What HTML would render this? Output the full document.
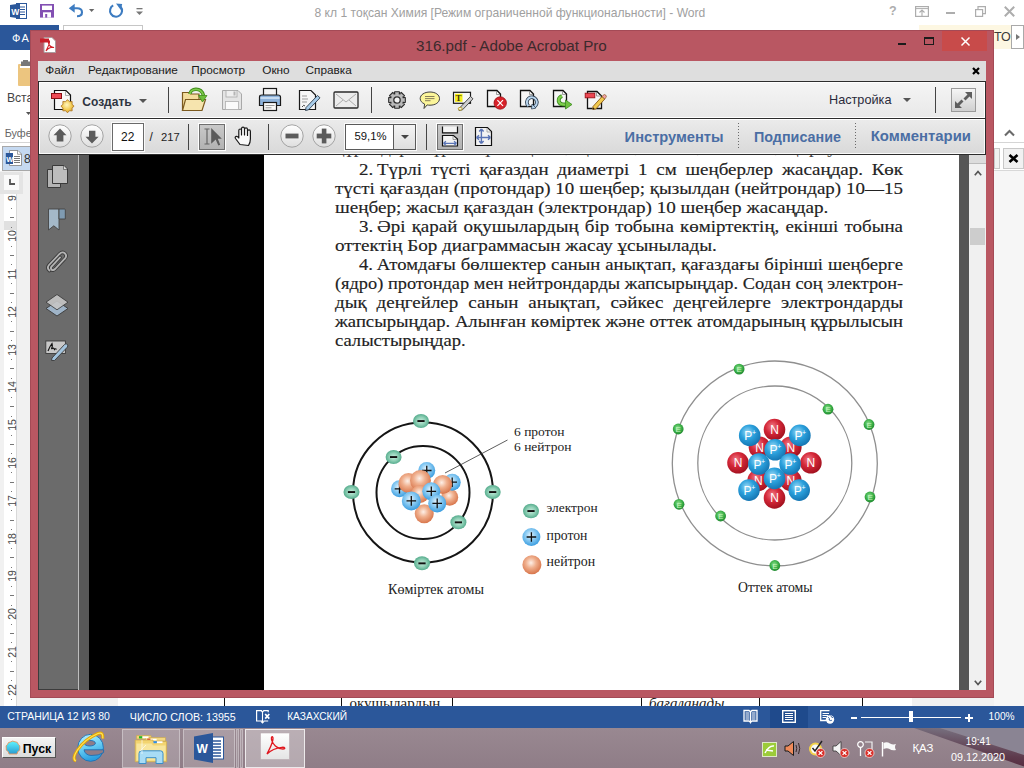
<!DOCTYPE html>
<html><head><meta charset="utf-8">
<style>
*{margin:0;padding:0;box-sizing:border-box}
html,body{width:1024px;height:768px;overflow:hidden;background:#fff;font-family:"Liberation Sans",sans-serif}
.a{position:absolute}
.t{white-space:nowrap}
svg{overflow:visible}
</style></head><body>
<div class="a" style="left:0px;top:0px;width:1024px;height:25px;background:#fff"></div>
<svg class="a" style="left:10px;top:3px;" width="17" height="16" viewBox="0 0 17 16"><rect x="6.5" y="0.5" width="10" height="15" fill="#fff" stroke="#2b579a"/>
<line x1="9" y1="4" x2="15" y2="4" stroke="#2b579a"/><line x1="9" y1="6.5" x2="15" y2="6.5" stroke="#2b579a"/>
<line x1="9" y1="9" x2="15" y2="9" stroke="#2b579a"/><line x1="9" y1="11.5" x2="15" y2="11.5" stroke="#2b579a"/>
<path d="M0 2 L10 0.5 L10 15.5 L0 14 Z" fill="#2b579a"/>
<text x="1.2" y="11.5" font-family="Liberation Sans" font-weight="700" font-size="8.5" fill="#fff">W</text></svg>
<svg class="a" style="left:40px;top:4px;" width="14" height="14" viewBox="0 0 14 14"><rect x="0" y="0" width="14" height="13.6" fill="#8350b3"/>
<rect x="2" y="1.6" width="10" height="4.4" fill="#fff"/>
<rect x="3" y="8.3" width="8" height="5.3" fill="#fff"/><rect x="5.2" y="10" width="2" height="3.6" fill="#8350b3"/></svg>
<svg class="a" style="left:68px;top:3px;" width="17" height="15" viewBox="0 0 17 15"><path d="M3 5.3 H9 Q14 5.3 14 9.2 Q14 13.3 9 13.3" fill="none" stroke="#3d7cc1" stroke-width="2.1"/>
<path d="M0.8 5.3 L6.7 0.8 V9.8 Z" fill="#3d7cc1"/></svg>
<svg class="a" style="left:88.7px;top:9px;" width="5.3" height="3" viewBox="0 0 5.3 3"><path d="M0 0 H5.3 L2.65 3 Z" fill="#666"/></svg>
<svg class="a" style="left:108px;top:2px;" width="16" height="16" viewBox="0 0 16 16"><path d="M5.2 3.4 A6 6 0 1 0 12.6 4.8" fill="none" stroke="#3d7cc1" stroke-width="2.1"/>
<path d="M8 1.5 L14.2 2 L12.8 8 Z" fill="#3d7cc1"/></svg>
<svg class="a" style="left:136px;top:8px;" width="7" height="8" viewBox="0 0 7 8"><rect x="0.5" y="0" width="6" height="1.3" fill="#777"/><path d="M0 3.5 H7 L3.5 7 Z" fill="#777"/></svg>
<div class="a t" style="left:314.5px;top:6.76px;font-size:12.1px;line-height:12.1px;color:#a0a0a0;font-weight:400;font-family:'Liberation Sans',sans-serif;">8 кл 1 тоқсан Химия [Режим ограниченной функциональности] - Word</div>
<div class="a t" style="left:889px;top:4.92px;font-size:12.5px;line-height:12.5px;color:#adadad;font-weight:700;font-family:'Liberation Sans',sans-serif;">?</div>
<svg class="a" style="left:915px;top:6px;" width="14" height="11" viewBox="0 0 14 11"><rect x="0.6" y="0.6" width="12.8" height="9.8" fill="none" stroke="#adadad" stroke-width="1.2"/><line x1="0.6" y1="2.6" x2="13.4" y2="2.6" stroke="#adadad" stroke-width="1"/><path d="M4.5 6.5 L7 4 L9.5 6.5 M7 4 V10" fill="none" stroke="#adadad" stroke-width="1.1"/></svg>
<div class="a" style="left:946px;top:12px;width:9px;height:2px;background:#adadad"></div>
<svg class="a" style="left:975px;top:6px;" width="11" height="11" viewBox="0 0 11 11"><rect x="0.6" y="3.6" width="7" height="6.8" fill="none" stroke="#adadad" stroke-width="1.2"/><path d="M3 3.6 V0.6 H10.4 V7.6 H7.6" fill="none" stroke="#adadad" stroke-width="1.2"/></svg>
<svg class="a" style="left:1004px;top:6px;" width="11" height="11" viewBox="0 0 11 11"><path d="M0.8 0.8 L10.2 10.2 M10.2 0.8 L0.8 10.2" stroke="#adadad" stroke-width="2"/></svg>
<div class="a" style="left:0px;top:25px;width:59px;height:25px;background:#2b579a"></div>
<div class="a t" style="left:12px;top:32.69px;font-size:11px;line-height:11px;color:#fff;font-weight:400;font-family:'Liberation Sans',sans-serif;letter-spacing:1.3px">ФАЙЛ</div>
<div class="a" style="left:63px;top:25px;width:80px;height:30px;border:1px solid #c6c6c6;border-bottom:none;background:#fff"></div>
<div class="a" style="left:919px;top:25px;width:92px;height:24px;background:#fdf7e2"></div>
<div class="a t" style="left:994px;top:31.12px;font-size:12.5px;line-height:12.5px;color:#3a3a3a;font-weight:400;font-family:'Liberation Sans',sans-serif;">ТОІ</div>
<div class="a" style="left:1011px;top:25px;width:13px;height:24px;background:#fff;border:1.5px solid #a9a9a9"></div>
<svg class="a" style="left:1016px;top:34px;" width="4" height="6" viewBox="0 0 4 6"><path d="M0 0 L4 3 L0 6 Z" fill="#777"/></svg>
<svg class="a" style="left:17px;top:60px;" width="14" height="27" viewBox="0 0 14 27"><rect x="1" y="4" width="14" height="22" rx="1" fill="#ecc57f"/>
<rect x="4" y="1.5" width="9" height="6" fill="#777" /><rect x="6" y="0" width="5" height="3" fill="#777"/><rect x="3" y="6" width="11" height="2" fill="#fff"/></svg>
<div class="a t" style="left:6.9px;top:92.47px;font-size:12.2px;line-height:12.2px;color:#444;font-weight:400;font-family:'Liberation Sans',sans-serif;">Вставить</div>
<svg class="a" style="left:26px;top:112px;" width="5" height="3" viewBox="0 0 5 3"><path d="M0 0 H5 L2.5 3 Z" fill="#555"/></svg>
<div class="a t" style="left:4.7px;top:128.46px;font-size:10.8px;line-height:10.8px;color:#666;font-weight:400;font-family:'Liberation Sans',sans-serif;">Буфер</div>
<div class="a" style="left:0px;top:142px;width:1024px;height:1px;background:#d5d5d5"></div>
<svg class="a" style="left:1004px;top:130px;" width="11" height="6" viewBox="0 0 11 6"><path d="M1 5.5 L5.5 1 L10 5.5" fill="none" stroke="#6a6a6a" stroke-width="2.1"/></svg>
<div class="a" style="left:0px;top:143px;width:1024px;height:28px;background:#fff"></div>
<div class="a" style="left:2px;top:146px;width:60px;height:25px;background:#c5d9f1;border:1px solid #a8a8a8"></div>
<svg class="a" style="left:5px;top:150px;" width="18" height="17" viewBox="0 0 18 17"><path d="M4.5 0.5 H13 L16.5 4 V15.5 H4.5 Z" fill="#fff" stroke="#8a8a8a" stroke-width="0.9"/><path d="M12.5 0.8 V4.3 H16.2" fill="none" stroke="#8a8a8a" stroke-width="0.8"/>
<line x1="9" y1="6.5" x2="15" y2="6.5" stroke="#777"/><line x1="9" y1="8.5" x2="15" y2="8.5" stroke="#777"/><line x1="9" y1="10.5" x2="15" y2="10.5" stroke="#777"/><line x1="9" y1="12.5" x2="15" y2="12.5" stroke="#777"/>
<path d="M0.8 3 H8 V14 H0.8 Z" fill="#2b579a"/><text x="1.2" y="11.6" font-family="Liberation Sans" font-weight="700" font-size="7.5" fill="#fff">W</text></svg>
<div class="a t" style="left:24px;top:152.84px;font-size:12px;line-height:12px;color:#333;font-weight:400;font-family:'Liberation Sans',sans-serif;">8</div>
<div class="a" style="left:1003px;top:148px;width:21px;height:21px;background:#f1f1f1;border:1px solid #c8c8c8"></div>
<svg class="a" style="left:1008px;top:154px;" width="11" height="9" viewBox="0 0 11 9"><path d="M1.5 1 L9.5 8 M9.5 1 L1.5 8" stroke="#000" stroke-width="2.6"/></svg>
<div class="a" style="left:994px;top:148px;width:6px;height:21px;background:#f1f1f1;border:1px solid #c8c8c8"></div>
<div class="a" style="left:994px;top:170px;width:30px;height:1px;background:#d8d8d8"></div>
<div class="a" style="left:0px;top:171px;width:1024px;height:535px;background:#f1f1f1"></div>
<div class="a" style="left:994px;top:171px;width:30px;height:535px;background:#f6f6f6"></div>
<div class="a" style="left:0px;top:172px;width:23px;height:22px;background:#e4e4e4"></div>
<div class="a" style="left:4px;top:175px;width:15px;height:15px;background:#fafafa"></div>
<svg class="a" style="left:9px;top:179px;" width="6" height="6" viewBox="0 0 6 6"><path d="M1 0 V5 H6" fill="none" stroke="#555" stroke-width="1.8"/></svg>
<div class="a" style="left:4px;top:194px;width:13px;height:512px;background:#fff"></div>
<div class="a" style="left:16px;top:194px;width:1px;height:512px;background:#d9d9d9"></div>
<div class="a" style="left:4px;top:221px;width:12px;height:9px;background:#e0e0e0"></div>
<div class="a t" style="left:1.6999999999999993px;top:192.3px;width:20px;height:12px;line-height:12px;text-align:center;font-size:10.5px;color:#444;transform:rotate(-90deg)">9</div>
<div class="a" style="left:11px;top:208px;width:1px;height:1px;background:#777"></div>
<div class="a" style="left:10px;top:217px;width:4px;height:1px;background:#777"></div>
<div class="a" style="left:11px;top:227px;width:1px;height:1px;background:#777"></div>
<div class="a t" style="left:1.6999999999999993px;top:230.10000000000002px;width:20px;height:12px;line-height:12px;text-align:center;font-size:10.5px;color:#444;transform:rotate(-90deg)">10</div>
<div class="a" style="left:11px;top:246px;width:1px;height:1px;background:#777"></div>
<div class="a" style="left:10px;top:255px;width:4px;height:1px;background:#777"></div>
<div class="a" style="left:11px;top:264px;width:1px;height:1px;background:#777"></div>
<div class="a t" style="left:1.6999999999999993px;top:267.9px;width:20px;height:12px;line-height:12px;text-align:center;font-size:10.5px;color:#444;transform:rotate(-90deg)">11</div>
<div class="a" style="left:11px;top:283px;width:1px;height:1px;background:#777"></div>
<div class="a" style="left:10px;top:293px;width:4px;height:1px;background:#777"></div>
<div class="a" style="left:11px;top:302px;width:1px;height:1px;background:#777"></div>
<div class="a t" style="left:1.6999999999999993px;top:305.7px;width:20px;height:12px;line-height:12px;text-align:center;font-size:10.5px;color:#444;transform:rotate(-90deg)">12</div>
<div class="a" style="left:11px;top:321px;width:1px;height:1px;background:#777"></div>
<div class="a" style="left:10px;top:331px;width:4px;height:1px;background:#777"></div>
<div class="a" style="left:11px;top:340px;width:1px;height:1px;background:#777"></div>
<div class="a t" style="left:1.6999999999999993px;top:343.5px;width:20px;height:12px;line-height:12px;text-align:center;font-size:10.5px;color:#444;transform:rotate(-90deg)">13</div>
<div class="a" style="left:11px;top:359px;width:1px;height:1px;background:#777"></div>
<div class="a" style="left:10px;top:368px;width:4px;height:1px;background:#777"></div>
<div class="a" style="left:11px;top:378px;width:1px;height:1px;background:#777"></div>
<div class="a t" style="left:1.6999999999999993px;top:381.3px;width:20px;height:12px;line-height:12px;text-align:center;font-size:10.5px;color:#444;transform:rotate(-90deg)">14</div>
<div class="a" style="left:11px;top:397px;width:1px;height:1px;background:#777"></div>
<div class="a" style="left:10px;top:406px;width:4px;height:1px;background:#777"></div>
<div class="a" style="left:11px;top:416px;width:1px;height:1px;background:#777"></div>
<div class="a t" style="left:1.6999999999999993px;top:419.1px;width:20px;height:12px;line-height:12px;text-align:center;font-size:10.5px;color:#444;transform:rotate(-90deg)">15</div>
<div class="a" style="left:11px;top:435px;width:1px;height:1px;background:#777"></div>
<div class="a" style="left:10px;top:444px;width:4px;height:1px;background:#777"></div>
<div class="a" style="left:11px;top:453px;width:1px;height:1px;background:#777"></div>
<div class="a t" style="left:1.6999999999999993px;top:456.9px;width:20px;height:12px;line-height:12px;text-align:center;font-size:10.5px;color:#444;transform:rotate(-90deg)">16</div>
<div class="a" style="left:11px;top:472px;width:1px;height:1px;background:#777"></div>
<div class="a" style="left:10px;top:482px;width:4px;height:1px;background:#777"></div>
<div class="a" style="left:11px;top:491px;width:1px;height:1px;background:#777"></div>
<div class="a t" style="left:1.6999999999999993px;top:494.7px;width:20px;height:12px;line-height:12px;text-align:center;font-size:10.5px;color:#444;transform:rotate(-90deg)">17</div>
<div class="a" style="left:11px;top:510px;width:1px;height:1px;background:#777"></div>
<div class="a" style="left:10px;top:520px;width:4px;height:1px;background:#777"></div>
<div class="a" style="left:11px;top:529px;width:1px;height:1px;background:#777"></div>
<div class="a t" style="left:1.6999999999999993px;top:532.5px;width:20px;height:12px;line-height:12px;text-align:center;font-size:10.5px;color:#444;transform:rotate(-90deg)">18</div>
<div class="a" style="left:11px;top:548px;width:1px;height:1px;background:#777"></div>
<div class="a" style="left:10px;top:557px;width:4px;height:1px;background:#777"></div>
<div class="a" style="left:11px;top:567px;width:1px;height:1px;background:#777"></div>
<div class="a t" style="left:1.6999999999999993px;top:570.3px;width:20px;height:12px;line-height:12px;text-align:center;font-size:10.5px;color:#444;transform:rotate(-90deg)">19</div>
<div class="a" style="left:11px;top:586px;width:1px;height:1px;background:#777"></div>
<div class="a" style="left:10px;top:595px;width:4px;height:1px;background:#777"></div>
<div class="a" style="left:11px;top:605px;width:1px;height:1px;background:#777"></div>
<div class="a t" style="left:1.6999999999999993px;top:608.0999999999999px;width:20px;height:12px;line-height:12px;text-align:center;font-size:10.5px;color:#444;transform:rotate(-90deg)">20</div>
<div class="a" style="left:11px;top:624px;width:1px;height:1px;background:#777"></div>
<div class="a" style="left:10px;top:633px;width:4px;height:1px;background:#777"></div>
<div class="a" style="left:11px;top:642px;width:1px;height:1px;background:#777"></div>
<div class="a t" style="left:1.6999999999999993px;top:645.9px;width:20px;height:12px;line-height:12px;text-align:center;font-size:10.5px;color:#444;transform:rotate(-90deg)">21</div>
<div class="a" style="left:11px;top:661px;width:1px;height:1px;background:#777"></div>
<div class="a" style="left:10px;top:671px;width:4px;height:1px;background:#777"></div>
<div class="a" style="left:11px;top:680px;width:1px;height:1px;background:#777"></div>
<div class="a t" style="left:1.6999999999999993px;top:683.7px;width:20px;height:12px;line-height:12px;text-align:center;font-size:10.5px;color:#444;transform:rotate(-90deg)">22</div>
<div class="a" style="left:11px;top:699px;width:1px;height:1px;background:#777"></div>
<div class="a" style="left:118px;top:698px;width:794px;height:8px;background:#fff"></div>
<div class="a" style="left:224px;top:698px;width:1px;height:8px;background:#111"></div>
<div class="a" style="left:341px;top:698px;width:1px;height:8px;background:#111"></div>
<div class="a" style="left:452px;top:698px;width:1px;height:8px;background:#111"></div>
<div class="a" style="left:641px;top:698px;width:1px;height:8px;background:#111"></div>
<div class="a" style="left:759px;top:698px;width:1px;height:8px;background:#111"></div>
<div class="a" style="left:862px;top:698px;width:1px;height:8px;background:#111"></div>
<div class="a t" style="left:349.4px;top:696.24px;font-size:15px;line-height:15px;color:#1a1a1a;font-weight:400;font-family:'Liberation Serif',sans-serif;">окушылардың</div>
<div class="a t" style="left:649px;top:696.24px;font-size:15px;line-height:15px;color:#1a1a1a;font-weight:400;font-family:'Liberation Serif',sans-serif;"><i>бағаланады</i></div>
<div class="a" style="left:0px;top:706px;width:1024px;height:22px;background:#2b579a"></div>
<div class="a t" style="left:7.3px;top:711.93px;font-size:10.48px;line-height:10.48px;color:#fff;font-weight:400;font-family:'Liberation Sans',sans-serif;">СТРАНИЦА 12 ИЗ 80</div>
<div class="a t" style="left:129.8px;top:711.75px;font-size:10.69px;line-height:10.69px;color:#fff;font-weight:400;font-family:'Liberation Sans',sans-serif;">ЧИСЛО СЛОВ: 13955</div>
<svg class="a" style="left:255px;top:709px;" width="17" height="16" viewBox="0 0 17 16"><path d="M7 1.6 H1.6 V12 H7" fill="none" stroke="#fff" stroke-width="1.2"/>
<path d="M6.2 1.6 L7.5 3 L8.8 1.6 H13.2 V3.2" fill="none" stroke="#fff" stroke-width="1.2"/>
<path d="M7.5 3 V13.8 M6 12.3 L7.5 14 L9 12.3 M8.5 12 H13.2" fill="none" stroke="#fff" stroke-width="1.1"/>
<path d="M10.2 5 L14.3 9.6 M14.3 5 L10.2 9.6" stroke="#fff" stroke-width="1.7"/></svg>
<div class="a t" style="left:287.2px;top:712.17px;font-size:10.19px;line-height:10.19px;color:#fff;font-weight:400;font-family:'Liberation Sans',sans-serif;">КАЗАХСКИЙ</div>
<div class="a" style="left:770px;top:706px;width:38px;height:22px;background:#1f4a8c"></div>
<svg class="a" style="left:743px;top:709px;" width="15" height="15" viewBox="0 0 15 15"><path d="M1 1.5 H6 L7.5 2.8 L9 1.5 H14 V12 H9 L7.5 13.3 L6 12 H1 Z" fill="none" stroke="#fff" stroke-width="1.3"/>
<path d="M2.5 4 H6.5 M2.5 6 H6.5 M2.5 8 H6.5 M2.5 10 H6.5 M8.5 4 H12.5 M8.5 6 H12.5 M8.5 8 H12.5 M8.5 10 H12.5" stroke="#fff" stroke-width="1"/><path d="M7.5 2.5 V14.5" stroke="#fff" stroke-width="1"/></svg>
<svg class="a" style="left:782px;top:710px;" width="14" height="13" viewBox="0 0 14 13"><rect x="0.7" y="0.7" width="12.6" height="11.6" fill="none" stroke="#fff" stroke-width="1.4"/>
<path d="M3 3.5 H11 M3 5.5 H11 M3 7.5 H11 M3 9.5 H11" stroke="#fff" stroke-width="1.1"/></svg>
<svg class="a" style="left:820px;top:710px;" width="15" height="14" viewBox="0 0 15 14"><path d="M9.5 0.7 H0.7 V10.5 H6" fill="none" stroke="#fff" stroke-width="1.3"/>
<path d="M2.5 3.5 H9 M2.5 5.5 H8 M2.5 7.5 H6" stroke="#fff" stroke-width="1"/>
<circle cx="10" cy="9.5" r="4.2" fill="#fff"/><path d="M8.3 7.2 Q10 8.5 9.2 10 Q10.5 11 11.8 10.3 M10.5 5.8 Q12 7 12.8 8" fill="none" stroke="#2b579a" stroke-width="1"/></svg>
<div class="a" style="left:851px;top:717px;width:6px;height:2px;background:#fff"></div>
<div class="a" style="left:861px;top:717px;width:100px;height:1px;background:#fff"></div>
<div class="a" style="left:909px;top:711px;width:4px;height:11px;background:#fff"></div>
<div class="a" style="left:965px;top:717px;width:8px;height:2px;background:#fff"></div>
<div class="a" style="left:968px;top:714px;width:2px;height:8px;background:#fff"></div>
<div class="a t" style="left:988.6px;top:712.19px;font-size:10.17px;line-height:10.17px;color:#fff;font-weight:400;font-family:'Liberation Sans',sans-serif;">100%</div>
<div class="a" style="left:0px;top:728px;width:1024px;height:40px;background:linear-gradient(#998891,#8f7d87)"></div>
<svg class="a" style="left:900px;top:728px;" width="124" height="40" viewBox="0 0 124 40"><defs><linearGradient id="gstk" x1="0" y1="1" x2="0.25" y2="0"><stop offset="0" stop-color="#4e2236"/><stop offset="0.45" stop-color="#5e3a4c"/><stop offset="1" stop-color="#77707f"/></linearGradient></defs>
<path d="M40 0 H124 V27 Z" fill="#8a8493"/>
<path d="M14 0 H40 L124 27 V38.5 Z" fill="url(#gstk)"/></svg>
<div class="a" style="left:2px;top:737px;width:54px;height:21px;background:linear-gradient(#f4f4f4,#dcdcdc);border:1px solid #fff;border-right-color:#555;border-bottom-color:#555"></div>
<svg class="a" style="left:5px;top:740px;" width="16" height="16" viewBox="0 0 16 16"><defs><linearGradient id="gsh" x1="0" y1="0" x2="0" y2="1"><stop offset="0" stop-color="#5ef6ff"/><stop offset="1" stop-color="#2a9ad0"/></linearGradient></defs>
<path d="M4 14 L3.2 11.5 Q0.5 10.5 1.2 8 Q0.3 5.5 2.5 4.5 Q3 1.8 5.5 2 Q7.5 0.3 10 1.8 Q12.8 1.5 13.3 4.5 Q15.6 5.5 14.8 8 Q15.5 10.5 12.8 11.5 L12 14 Z" fill="url(#gsh)" stroke="#e8945a" stroke-width="0.9"/></svg>
<div class="a t" style="left:22.7px;top:742.50px;font-size:12.4px;line-height:12.4px;color:#000;font-weight:700;font-family:'Liberation Sans',sans-serif;">Пуск</div>
<svg class="a" style="left:70px;top:728px;" width="40" height="40" viewBox="0 0 40 40"><defs><linearGradient id="gie" x1="0" y1="0" x2="0.3" y2="1"><stop offset="0" stop-color="#bff4ff"/><stop offset="0.5" stop-color="#6fd2f6"/><stop offset="1" stop-color="#2a9ee0"/></linearGradient></defs>
<ellipse cx="20.6" cy="19.8" rx="12.8" ry="13.5" fill="url(#gie)" stroke="#1c6fb4" stroke-width="0.9"/>
<ellipse cx="19.8" cy="15.2" rx="5.6" ry="2.8" fill="#8f7c87" stroke="#1c6fb4" stroke-width="0.9"/>
<path d="M14 21.8 H33.6 V24.5 Q29 27.8 21 27.5 Q15 27 14 21.8 Z" fill="#8f7c87" stroke="#1c6fb4" stroke-width="0.9"/>
<path d="M6 33 Q1.5 31 7.5 22 Q15 11 28 5.5 Q33.5 3.5 32.8 10.5" fill="none" stroke="#e9a800" stroke-width="3"/>
<path d="M6 33 Q1.5 31 7.5 22 Q15 11 28 5.5 Q33.5 3.5 32.8 10.5" fill="none" stroke="#fde35a" stroke-width="1.2"/></svg>
<div class="a" style="left:122px;top:729px;width:58px;height:39px;background:rgba(255,255,255,0.18);border:1px solid rgba(255,255,255,0.35)"></div>
<svg class="a" style="left:134px;top:734px;" width="34" height="31" viewBox="0 0 34 31"><path d="M2.5 1.5 H17 L17.5 5 H2.5 Z" fill="#f1d37a" stroke="#caa64a" stroke-width="0.6"/>
<path d="M11.5 3.5 H31.5 V7 H11.5 Z" fill="#f3d883" stroke="#caa64a" stroke-width="0.6"/>
<rect x="5" y="2.2" width="3.3" height="2.2" fill="#1fb82a"/><rect x="8.5" y="2.4" width="6" height="1.8" fill="#fff"/>
<rect x="13.2" y="4.6" width="3.3" height="2" fill="#e03a2a"/><rect x="16.6" y="4.8" width="6" height="1.6" fill="#fff"/>
<path d="M1.2 6 H19 V7.5 H32.6 V27.7 H1.2 Z" fill="#f3d470" stroke="#d0ad50" stroke-width="0.8"/>
<rect x="19.5" y="7.2" width="3.3" height="2" fill="#2a8ef0"/><rect x="23" y="7.3" width="5.5" height="1.8" fill="#fff"/>
<path d="M2.5 9.5 H17.5 L19 11.5 H31.5 V26.5 H2.5 Z" fill="#f8e59c"/>
<path d="M5 19.5 Q5 16.8 7.5 16.8 H26.5 Q29 16.8 29 19.5 V29.5 H22 V23.7 H12 V29.5 H5 Z" fill="#a8dcf5" stroke="#3a8ec8" stroke-width="1"/>
<path d="M8 6 V20 M6 17 L12 11" stroke="#fff" stroke-width="0.7" opacity="0.9"/></svg>
<div class="a" style="left:183px;top:729px;width:52px;height:39px;background:rgba(255,255,255,0.18);border:1px solid rgba(255,255,255,0.35)"></div>
<div class="a" style="left:236px;top:729px;width:3px;height:39px;background:rgba(255,255,255,0.16);border:1px solid rgba(255,255,255,0.3)"></div>
<div class="a" style="left:240px;top:729px;width:3px;height:39px;background:rgba(255,255,255,0.16);border:1px solid rgba(255,255,255,0.3)"></div>
<svg class="a" style="left:194px;top:733px;" width="30" height="30" viewBox="0 0 30 30"><rect x="14" y="4" width="15.5" height="22" fill="#fff" stroke="#2b579a" stroke-width="1"/>
<path d="M17 8 H27 M17 11 H27 M17 14 H27 M17 17 H27 M17 20 H27 M17 23 H27" stroke="#2b579a" stroke-width="1.3"/>
<path d="M0 3.5 L19 0 V30 L0 26.5 Z" fill="#2b579a"/>
<text x="2.5" y="19.5" font-family="Liberation Sans" font-weight="700" font-size="12" fill="#fff">W</text></svg>
<div class="a" style="left:245px;top:729px;width:60px;height:39px;background:rgba(255,255,255,0.33);border:1px solid rgba(255,255,255,0.75)"></div>
<svg class="a" style="left:260px;top:733px;" width="30" height="27" viewBox="0 0 30 27"><defs><linearGradient id="gacr" x1="0" y1="0" x2="0" y2="1"><stop offset="0" stop-color="#fff"/><stop offset="1" stop-color="#e4e4e4"/></linearGradient></defs>
<rect x="0.5" y="0" width="29" height="26.5" fill="url(#gacr)" stroke="#b9a9b0" stroke-width="0.6"/>
<path d="M7 21 C10 15 13.5 9 13 5 C12.5 2.5 11 3.5 11.5 6.5 C12.5 11 17 16 23 16 C26 16 25 14 22 14.3 C17 14.8 11 17 7 21 Z" fill="none" stroke="#e0161e" stroke-width="1.3"/></svg>
<svg class="a" style="left:762px;top:742px;" width="15" height="15" viewBox="0 0 15 15"><rect x="0.5" y="0.5" width="14" height="14" fill="#9ccc3a" stroke="#dfe8c8" stroke-width="1"/><path d="M3 11 Q7 3 12 4 M4 8 L11 9" stroke="#fff" stroke-width="1.5" fill="none"/></svg>
<svg class="a" style="left:784px;top:740px;" width="17" height="17" viewBox="0 0 17 17"><path d="M1 6 H4 L9.5 1.5 V15.5 L4 11 H1 Z" fill="#f08a5a" stroke="#1a1a1a" stroke-width="1"/>
<path d="M12 5 Q13.5 8.5 12 12 M14.5 3 Q17 8.5 14.5 14" fill="none" stroke="#3a2a2a" stroke-width="1"/></svg>
<svg class="a" style="left:808px;top:740px;" width="18" height="18" viewBox="0 0 18 18"><circle cx="7.5" cy="9" r="6.5" fill="#f3d24a"/><circle cx="7.5" cy="9" r="4.5" fill="#fafafa"/>
<path d="M4.5 8 L7 11 L14 1" fill="none" stroke="#222" stroke-width="1.4"/>
<circle cx="12.5" cy="13" r="4.5" fill="#d9302a" stroke="#fff" stroke-width="0.6"/><path d="M10.6 11.1 L14.4 14.9 M14.4 11.1 L10.6 14.9" stroke="#fff" stroke-width="1.3"/></svg>
<svg class="a" style="left:832px;top:740px;" width="18" height="18" viewBox="0 0 18 18"><path d="M1 6 H4 L9 1.5 V15.5 L4 11 H1 Z" fill="#f4f4f4" stroke="#333" stroke-width="0.8"/>
<circle cx="12.5" cy="13" r="4.5" fill="#d9302a" stroke="#fff" stroke-width="0.6"/><path d="M10.6 11.1 L14.4 14.9 M14.4 11.1 L10.6 14.9" stroke="#fff" stroke-width="1.3"/></svg>
<svg class="a" style="left:857px;top:740px;" width="18" height="18" viewBox="0 0 18 18"><circle cx="3.5" cy="4.5" r="2.8" fill="none" stroke="#fff" stroke-width="1.2"/><path d="M3.5 7 V16" stroke="#fff" stroke-width="1.3"/>
<path d="M8 2 H15 V10 M8 16 H10" fill="none" stroke="#f0f0f0" stroke-width="1.2"/>
<circle cx="12.5" cy="13" r="4.5" fill="#d9302a" stroke="#fff" stroke-width="0.6"/><path d="M10.6 11.1 L14.4 14.9 M14.4 11.1 L10.6 14.9" stroke="#fff" stroke-width="1.3"/></svg>
<svg class="a" style="left:881px;top:741px;" width="16" height="16" viewBox="0 0 16 16"><path d="M1.5 1 V15.5" stroke="#fff" stroke-width="1.4"/><path d="M2.5 2 Q6 0.5 9 2.5 Q12 4 15 3 Q13 6 15 9 Q11 10 8.5 8 Q6 6.5 2.5 8 Z" fill="#f8f8f8"/></svg>
<div class="a t" style="left:912.4px;top:743.05px;font-size:11.4px;line-height:11.4px;color:#fff;font-weight:400;font-family:'Liberation Sans',sans-serif;">ҚАЗ</div>
<div class="a t" style="left:965.7px;top:736.53px;font-size:10.0px;line-height:10.0px;color:#fff;font-weight:400;font-family:'Liberation Sans',sans-serif;">19:41</div>
<div class="a t" style="left:951px;top:752.47px;font-size:10.79px;line-height:10.79px;color:#fff;font-weight:400;font-family:'Liberation Sans',sans-serif;">09.12.2020</div>
<div class="a" style="left:30px;top:30px;width:964px;height:668px;background:#b95762;border:1px solid #a44a56"></div>
<div class="a" style="left:942px;top:31px;width:45px;height:20px;background:#c84b4a"></div>
<svg class="a" style="left:40px;top:36px;" width="16" height="17" viewBox="0 0 16 17"><path d="M4 1.5 H12 L15.5 5 V16.5 H4 Z" fill="#fff" stroke="#aa9a9c" stroke-width="1"/>
<rect x="0" y="2.5" width="9" height="4" fill="#c8202a"/>
<path d="M6 15 C8 11 10 7 9.5 5.5 C9 4 8 5 8.5 7 C9 9 11 11.5 14 11.5 C12 10.8 8 12 6 15 Z" fill="none" stroke="#d01e24" stroke-width="1.1"/></svg>
<div class="a t" style="left:416px;top:38.38px;font-size:15.2px;line-height:15.2px;color:#3c2a2d;font-weight:400;font-family:'Liberation Sans',sans-serif;">316.pdf - Adobe Acrobat Pro</div>
<div class="a" style="left:898px;top:43px;width:8px;height:2px;background:#1b1b1b"></div>
<div class="a" style="left:924px;top:37px;width:10px;height:8px;border:1px solid #1b1b1b;border-top-width:2px"></div>
<svg class="a" style="left:961px;top:37px;" width="9" height="9" viewBox="0 0 9 9"><path d="M0.5 0.5 L8.5 8.5 M8.5 0.5 L0.5 8.5" stroke="#fff" stroke-width="1.5"/></svg>
<div class="a" style="left:38px;top:61px;width:948px;height:20px;background:#dedede"></div>
<div class="a t" style="left:45.3px;top:64.61px;font-size:11.8px;line-height:11.8px;color:#1a1a1a;font-weight:400;font-family:'Liberation Sans',sans-serif;">Файл</div>
<div class="a t" style="left:88px;top:64.61px;font-size:11.8px;line-height:11.8px;color:#1a1a1a;font-weight:400;font-family:'Liberation Sans',sans-serif;">Редактирование</div>
<div class="a t" style="left:191.25px;top:64.61px;font-size:11.8px;line-height:11.8px;color:#1a1a1a;font-weight:400;font-family:'Liberation Sans',sans-serif;">Просмотр</div>
<div class="a t" style="left:262.25px;top:64.61px;font-size:11.8px;line-height:11.8px;color:#1a1a1a;font-weight:400;font-family:'Liberation Sans',sans-serif;">Окно</div>
<div class="a t" style="left:305.5px;top:64.61px;font-size:11.8px;line-height:11.8px;color:#1a1a1a;font-weight:400;font-family:'Liberation Sans',sans-serif;">Справка</div>
<svg class="a" style="left:972px;top:67px;" width="8" height="8" viewBox="0 0 8 8"><path d="M1 1 L7 7 M7 1 L1 7" stroke="#000" stroke-width="2.2"/></svg>
<div class="a" style="left:38px;top:81px;width:948px;height:38px;background:linear-gradient(#f5f5f5,#e8e8e8);border:1px solid #2c2c2c;box-shadow:inset 1px 1px 0 #fff,inset -1px -1px 0 #fff"></div>
<div class="a" style="left:38px;top:118px;width:948px;height:37px;background:linear-gradient(#ebebeb,#d9d9d9);border:1px solid #2c2c2c;box-shadow:inset 1px 1px 0 #fff,inset -1px -1px 0 #fafafa"></div>
<div class="a" style="left:168px;top:87px;width:1px;height:26px;background:#444"></div>
<div class="a" style="left:371px;top:87px;width:1px;height:26px;background:#444"></div>
<div class="a" style="left:935px;top:87px;width:1px;height:26px;background:#444"></div>
<div class="a" style="left:188px;top:124px;width:1px;height:26px;background:#444"></div>
<div class="a" style="left:268px;top:124px;width:1px;height:26px;background:#444"></div>
<div class="a" style="left:426px;top:124px;width:1px;height:26px;background:#444"></div>
<svg class="a" style="left:50px;top:89px;" width="26" height="22" viewBox="0 0 26 22"><path d="M4.5 1.5 H16 L20.5 6 V20.5 H4.5 Z" fill="#f8f8f8" stroke="#111" stroke-width="1.2"/>
<path d="M15.5 2 V6.5 H20" fill="none" stroke="#999" stroke-width="0.8"/>
<rect x="1.5" y="4.5" width="10" height="5" fill="#ee4b55" stroke="#8c1015" stroke-width="1"/>
<defs><radialGradient id="gstar" cx="45%" cy="40%" r="60%"><stop offset="0" stop-color="#fff6c0"/><stop offset="0.6" stop-color="#f2cc55"/><stop offset="1" stop-color="#dca030"/></radialGradient></defs><path d="M17.50 10.60 L19.38 12.67 L22.17 12.53 L22.03 15.32 L24.10 17.20 L22.03 19.08 L22.17 21.87 L19.38 21.73 L17.50 23.80 L15.62 21.73 L12.83 21.87 L12.97 19.08 L10.90 17.20 L12.97 15.32 L12.83 12.53 L15.62 12.67 Z" fill="url(#gstar)" stroke="#a8701c" stroke-width="0.8" stroke-linejoin="round"/></svg>
<div class="a t" style="left:82.3px;top:96.14px;font-size:12px;line-height:12px;color:#2e3440;font-weight:700;font-family:'Liberation Sans',sans-serif;transform:scaleX(1.0)">Создать</div>
<svg class="a" style="left:139px;top:99px;" width="8" height="4" viewBox="0 0 8 4"><path d="M0 0 H8 L4 4 Z" fill="#555"/></svg>
<svg class="a" style="left:181px;top:87px;" width="26" height="25" viewBox="0 0 26 25"><path d="M1.5 5.5 H8 L9.5 7 H18 V23.5 H1.5 Z" fill="#f3dd9c" stroke="#7c5a1e" stroke-width="1.2"/>
<path d="M4.5 12.5 H24.5 L21 23.5 H1.5 Z" fill="#f6e4ae" stroke="#7c5a1e" stroke-width="1.2"/>
<path d="M9 7 C9 1.5 20 -0.5 22.5 8.5" fill="none" stroke="#3f8a1a" stroke-width="3.4"/>
<path d="M9 7 C9 1.5 20 -0.5 22.5 8.5" fill="none" stroke="#7cc94a" stroke-width="1.8"/>
<path d="M17.5 8.5 H26 L21.5 15 Z" fill="#6dbf3a" stroke="#3f8a1a" stroke-width="0.8"/></svg>
<svg class="a" style="left:222px;top:90px;" width="20" height="20" viewBox="0 0 20 20"><path d="M0.5 0.5 H16 L19.5 4 V19.5 H0.5 Z" fill="#e4e4e4" stroke="#a9a9a9" stroke-width="1"/>
<rect x="4" y="0.5" width="11" height="6.5" fill="#efefef" stroke="#a9a9a9" stroke-width="0.8"/><rect x="11.5" y="1.5" width="2" height="4" fill="#b5b5b5"/>
<rect x="3.5" y="11.5" width="13" height="8" fill="#fafafa" stroke="#b0b0b0" stroke-width="0.8"/></svg>
<svg class="a" style="left:258px;top:87px;" width="24" height="24" viewBox="0 0 24 24"><rect x="5.5" y="1.5" width="13" height="9" fill="#f4f4f4" stroke="#1a1a1a" stroke-width="1.2"/>
<path d="M1.5 10 Q1.5 8 4 8 H20 Q22.5 8 22.5 10 V18.5 H1.5 Z" fill="#8db2db" stroke="#1a1a1a" stroke-width="1.2"/>
<rect x="2.5" y="10" width="19" height="2" fill="#c6dbf0"/>
<rect x="5.5" y="15.5" width="13" height="8" fill="#fafafa" stroke="#1a1a1a" stroke-width="1.2"/>
<line x1="7.5" y1="18.5" x2="16.5" y2="18.5" stroke="#999"/><line x1="7.5" y1="20.8" x2="13.5" y2="20.8" stroke="#999"/></svg>
<svg class="a" style="left:298px;top:89px;" width="23" height="22" viewBox="0 0 23 22"><path d="M1.5 1.5 H13 L17.5 6 V20.5 H1.5 Z" fill="#f6f6f6" stroke="#1a1a1a" stroke-width="1.2"/>
<line x1="4" y1="7" x2="9" y2="7" stroke="#999"/><line x1="4" y1="10" x2="10" y2="10" stroke="#999"/><line x1="4" y1="13" x2="9" y2="13" stroke="#999"/>
<path d="M4 18 Q6 15 7 17" fill="none" stroke="#222" stroke-width="0.8"/>
<path d="M8 18.5 L19.5 6.5 L22 8.8 L10.5 20.8 L7.5 21.5 Z" fill="#a9cdea" stroke="#2a3a4a" stroke-width="0.9"/></svg>
<svg class="a" style="left:333px;top:91px;" width="26" height="18" viewBox="0 0 26 18"><rect x="1" y="1" width="24" height="16" rx="1" fill="#ececec" stroke="#2a2a2a" stroke-width="1.3"/>
<path d="M3 3 L13 11 L23 3 M3 15 L10 9 M23 15 L16 9" fill="none" stroke="#a5a5a5" stroke-width="0.9"/></svg>
<svg class="a" style="left:388px;top:91px;" width="18" height="18" viewBox="0 0 18 18"><path d="M17.31 6.79 L17.31 11.21 L15.03 11.69 L15.16 11.36 L16.44 13.31 L13.31 16.44 L11.36 15.16 L11.69 15.03 L11.21 17.31 L6.79 17.31 L6.31 15.03 L6.64 15.16 L4.69 16.44 L1.56 13.31 L2.84 11.36 L2.97 11.69 L0.69 11.21 L0.69 6.79 L2.97 6.31 L2.84 6.64 L1.56 4.69 L4.69 1.56 L6.64 2.84 L6.31 2.97 L6.79 0.69 L11.21 0.69 L11.69 2.97 L11.36 2.84 L13.31 1.56 L16.44 4.69 L15.16 6.64 L15.03 6.31 Z" fill="#b9b9b9" stroke="#2a2a2a" stroke-width="1.1"/><circle cx="9" cy="9" r="3.2" fill="#f2f2f2" stroke="#333" stroke-width="1.3"/></svg>
<svg class="a" style="left:419px;top:91px;" width="22" height="19" viewBox="0 0 22 19"><path d="M11 1 C16.5 1 20.5 3.8 20.5 7.6 C20.5 11.4 16.5 14.2 11 14.2 C10 14.2 9 14.1 8.2 13.9 L5 17.5 L5.6 13 C2.8 11.8 1.2 9.8 1.2 7.6 C1.2 3.8 5.4 1 11 1 Z" fill="#fbf59a" stroke="#404040" stroke-width="1"/>
<line x1="6" y1="5.5" x2="15.5" y2="5.5" stroke="#7a7252" stroke-width="0.9"/><line x1="6" y1="7.6" x2="15.5" y2="7.6" stroke="#7a7252" stroke-width="0.9"/><line x1="6" y1="9.7" x2="11.5" y2="9.7" stroke="#7a7252" stroke-width="0.9"/></svg>
<svg class="a" style="left:452px;top:91px;" width="22" height="19" viewBox="0 0 22 19"><rect x="1.5" y="1.3" width="17" height="11" fill="#f8f8f8" stroke="#1a1a1a" stroke-width="1.2"/>
<rect x="3" y="2.8" width="7.5" height="8" fill="#f5ef1a"/>
<text x="3.6" y="10" font-family="Liberation Serif" font-size="9" font-weight="700" fill="#4a3a10">T</text>
<path d="M8 16.5 L18.5 5.5 L21 7.8 L10.5 18.8 L7 19.5 Z" fill="#cfcfcf" stroke="#3a3a3a" stroke-width="0.9"/>
<ellipse cx="8.2" cy="17.8" rx="2" ry="1.4" fill="#eee" stroke="#bba020" stroke-width="1"/></svg>
<svg class="a" style="left:486px;top:89px;" width="22" height="22" viewBox="0 0 22 22"><path d="M1.5 1.5 H11 L14.5 5 V17.5 H1.5 Z" fill="#f6f6f6" stroke="#111" stroke-width="1.3"/><path d="M10.5 2 V5.5 H14" fill="none" stroke="#888" stroke-width="0.8"/>
<circle cx="14.2" cy="14" r="6.2" fill="#d8222a" stroke="#9a1015" stroke-width="0.8"/><path d="M11.4 11.2 L17 16.8 M17 11.2 L11.4 16.8" stroke="#fff" stroke-width="1.2"/></svg>
<svg class="a" style="left:519px;top:89px;" width="20" height="22" viewBox="0 0 20 22"><path d="M1.5 1.5 H11 L14.5 5 V17.5 H1.5 Z" fill="#f6f6f6" stroke="#111" stroke-width="1.3"/><path d="M10.5 2 V5.5 H14" fill="none" stroke="#888" stroke-width="0.8"/>
<path d="M9.5 17 A5 5 0 1 1 14.5 18" fill="none" stroke="#27384a" stroke-width="3.6"/><path d="M9.5 17 A5 5 0 1 1 14.5 18" fill="none" stroke="#b9d5ee" stroke-width="2"/>
<path d="M13 15 L17 19 L12.5 20 Z" fill="#b9d5ee" stroke="#27384a" stroke-width="0.7"/></svg>
<svg class="a" style="left:552px;top:89px;" width="22" height="22" viewBox="0 0 22 22"><path d="M1.5 1.5 H11 L14.5 5 V17.5 H1.5 Z" fill="#f6f6f6" stroke="#111" stroke-width="1.3"/><path d="M10.5 2 V5.5 H14" fill="none" stroke="#888" stroke-width="0.8"/>
<path d="M10 7 C5 9 5 16 14 15.5" fill="none" stroke="#3a8a1e" stroke-width="4"/><path d="M10 7 C5 9 5 16 14 15.5" fill="none" stroke="#7fcf4e" stroke-width="2.2"/>
<path d="M13.5 11 L20 15.5 L13.5 20 Z" fill="#6fc23e" stroke="#3a8a1e" stroke-width="0.8"/></svg>
<svg class="a" style="left:584px;top:90px;" width="22" height="20" viewBox="0 0 22 20"><path d="M3.5 1.5 H13 L17.5 6 V18.5 H3.5 Z" fill="#f6f6f6" stroke="#111" stroke-width="1.3"/><path d="M12.5 2 V6 H17" fill="none" stroke="#888" stroke-width="0.8"/>
<rect x="1.2" y="3.2" width="9.6" height="4.6" fill="#ec4652" stroke="#9a1218" stroke-width="0.9"/>
<path d="M9 16.5 L18 6.5 L20.8 9 L11.8 19 L8.8 19.5 Z" fill="#f1c94e" stroke="#8a5a1a" stroke-width="0.9"/>
<path d="M18 6.5 L19.2 5.2 A1.3 1.3 0 0 1 21.8 7.6 L20.8 9 Z" fill="#f2a0a8" stroke="#8a5a1a" stroke-width="0.7"/>
<path d="M8.8 19.5 L9.3 17.6 L10.7 18.8 Z" fill="#111"/></svg>
<div class="a t" style="left:829px;top:94.45px;font-size:12.7px;line-height:12.7px;color:#2a2a3a;font-weight:400;font-family:'Liberation Sans',sans-serif;">Настройка</div>
<svg class="a" style="left:903px;top:98px;" width="8" height="4" viewBox="0 0 8 4"><path d="M0 0 H8 L4 4 Z" fill="#555"/></svg>
<svg class="a" style="left:951px;top:88px;" width="26" height="25" viewBox="0 0 26 25"><rect x="0.5" y="0.5" width="24" height="23" fill="url(#gexp)" stroke="#9a9a9a"/>
<defs><linearGradient id="gexp" x1="0" y1="0" x2="0" y2="1"><stop offset="0" stop-color="#f6f6f6"/><stop offset="1" stop-color="#cfcfcf"/></linearGradient></defs>
<path d="M14 4 H21 V11 L18.5 8.5 L14.5 12.5 L12.5 10.5 L16.5 6.5 Z" fill="#5e5e5e"/>
<path d="M11 20 H4 V13 L6.5 15.5 L10.5 11.5 L12.5 13.5 L8.5 17.5 Z" fill="#5e5e5e"/></svg>
<svg class="a" style="left:47.5px;top:124.4px;" width="24" height="24" viewBox="0 0 24 24"><defs><linearGradient id="gc59.5" x1="0" y1="0" x2="0" y2="1"><stop offset="0" stop-color="#ffffff"/><stop offset="1" stop-color="#dedede"/></linearGradient></defs>
<circle cx="12" cy="12" r="11.2" fill="url(#gc59.5)" stroke="#a3a3a3" stroke-width="1"/><path d="M12 4.6 L18.5 11.2 H15.4 V17.5 H8.7 V11.2 H5.5 Z" fill="#5b5b5b"/></svg>
<svg class="a" style="left:80.4px;top:124.4px;" width="24" height="24" viewBox="0 0 24 24"><defs><linearGradient id="gc92.4" x1="0" y1="0" x2="0" y2="1"><stop offset="0" stop-color="#ffffff"/><stop offset="1" stop-color="#dedede"/></linearGradient></defs>
<circle cx="12" cy="12" r="11.2" fill="url(#gc92.4)" stroke="#a3a3a3" stroke-width="1"/><path d="M12 19.6 L18.6 12.8 H15.4 V6.7 H9.0 V12.8 H5.5 Z" fill="#5b5b5b"/></svg>
<div class="a" style="left:112px;top:123px;width:32px;height:28px;background:#fff;border:1px solid #6a6a6a;box-shadow:0 0 0 1px #fafafa"></div>
<div class="a t" style="left:121px;top:130.84px;font-size:12px;line-height:12px;color:#111;font-weight:400;font-family:'Liberation Sans',sans-serif;">22</div>
<div class="a t" style="left:149.5px;top:130.84px;font-size:12px;line-height:12px;color:#222;font-weight:400;font-family:'Liberation Sans',sans-serif;">/</div>
<div class="a t" style="left:161px;top:131.52px;font-size:11.2px;line-height:11.2px;color:#222;font-weight:400;font-family:'Liberation Sans',sans-serif;">217</div>
<div class="a" style="left:198px;top:123px;width:28px;height:28px;border:1px solid #fff"></div>
<div class="a" style="left:199px;top:124px;width:26px;height:26px;background:linear-gradient(#c9c9c9,#b2b2b2);border:1px solid #6f6f6f"></div>
<svg class="a" style="left:203px;top:127px;" width="20" height="20" viewBox="0 0 20 20"><path d="M1.5 2 H6.5 M4 2 V17 M1.5 17 H6.5" fill="none" stroke="#666" stroke-width="1.2"/>
<path d="M8.2 1.1 L18.8 11.7 H14.8 L17.2 17.8 L15.3 18.6 L12.7 12.6 L8.2 16.7 Z" fill="#5b5b5b"/></svg>
<svg class="a" style="left:234px;top:126px;" width="21" height="21" viewBox="0 0 21 21"><path d="M6 18.5 L1.5 12.5 Q0.5 10.8 2.3 10.4 Q3.5 10.2 4.8 12 V4.5 Q4.8 3 6.2 3 Q7.4 3 7.5 4.5 V9 V2.8 Q7.6 1.2 9 1.2 Q10.4 1.2 10.5 2.8 V9 V3.2 Q10.6 1.8 12 1.8 Q13.4 1.8 13.5 3.4 V9.5 V5.2 Q13.6 3.8 15 3.8 Q16.4 3.8 16.4 5.4 V13 Q16.4 16.5 14.5 19.5 Z" fill="#fafafa" stroke="#1a1a1a" stroke-width="1.2" stroke-linejoin="round"/></svg>
<svg class="a" style="left:279.5px;top:124.4px;" width="24" height="24" viewBox="0 0 24 24"><defs><linearGradient id="gc291.5" x1="0" y1="0" x2="0" y2="1"><stop offset="0" stop-color="#ffffff"/><stop offset="1" stop-color="#dedede"/></linearGradient></defs>
<circle cx="12" cy="12" r="11.2" fill="url(#gc291.5)" stroke="#a3a3a3" stroke-width="1"/><rect x="5.5" y="9.6" width="13" height="4.8" fill="#5b5b5b"/></svg>
<svg class="a" style="left:312.4px;top:124.4px;" width="24" height="24" viewBox="0 0 24 24"><defs><linearGradient id="gc324.4" x1="0" y1="0" x2="0" y2="1"><stop offset="0" stop-color="#ffffff"/><stop offset="1" stop-color="#dedede"/></linearGradient></defs>
<circle cx="12" cy="12" r="11.2" fill="url(#gc324.4)" stroke="#a3a3a3" stroke-width="1"/><rect x="4.7" y="9.6" width="14.6" height="4.8" fill="#5b5b5b"/><rect x="9.8" y="4.6" width="4.6" height="14.8" fill="#5b5b5b"/></svg>
<div class="a" style="left:345px;top:124px;width:71px;height:26px;background:#fff;border:1px solid #5a5a5a;box-shadow:0 0 0 1px #fafafa"></div>
<div class="a" style="left:393px;top:125px;width:22px;height:24px;background:linear-gradient(#f4f4f4,#dedede);border-left:1px solid #5a5a5a"></div>
<div class="a t" style="left:354.5px;top:131.33px;font-size:11.3px;line-height:11.3px;color:#111;font-weight:400;font-family:'Liberation Sans',sans-serif;">59,1%</div>
<svg class="a" style="left:401px;top:135px;" width="8" height="4" viewBox="0 0 8 4"><path d="M0 0 H8 L4 4 Z" fill="#444"/></svg>
<div class="a" style="left:436px;top:123px;width:28px;height:28px;border:1px solid #fff"></div>
<div class="a" style="left:437px;top:124px;width:26px;height:26px;background:linear-gradient(#c9c9c9,#b2b2b2);border:1px solid #6f6f6f"></div>
<svg class="a" style="left:441px;top:126px;" width="18" height="22" viewBox="0 0 18 22"><path d="M1.5 0.5 V6.8 H16.5 V0.5" fill="#f3f3f3" stroke="#111" stroke-width="1.2"/>
<path d="M1.5 9.5 H12.5 L16.5 13 V20 H1.5 Z" fill="#f3f3f3" stroke="#111" stroke-width="1.2"/><path d="M12 10 V13.5 H16" fill="none" stroke="#888" stroke-width="0.8"/>
<path d="M2.5 17.3 H15.5 M2.5 17.3 L5 15.2 M2.5 17.3 L5 19.4 M15.5 17.3 L13 15.2 M15.5 17.3 L13 19.4" fill="none" stroke="#5a74b5" stroke-width="1.2"/></svg>
<svg class="a" style="left:474px;top:126px;" width="19" height="21" viewBox="0 0 19 21"><path d="M1.5 1.5 H13.5 L17.5 5.5 V19.5 H1.5 Z" fill="#f3f3f3" stroke="#111" stroke-width="1.2"/><path d="M13 2 V6 H17" fill="none" stroke="#999" stroke-width="0.8"/>
<path d="M7.4 3 V17.5 M2.5 11.5 H16.5 M7.4 3 L5.2 5.5 M7.4 3 L9.6 5.5 M7.4 17.5 L5.2 15 M7.4 17.5 L9.6 15 M2.5 11.5 L5 9.3 M2.5 11.5 L5 13.7 M16.5 11.5 L14 9.3 M16.5 11.5 L14 13.7" fill="none" stroke="#5a74b5" stroke-width="1.4"/></svg>
<div class="a t" style="left:624.6px;top:129.69px;font-size:14.66px;line-height:14.66px;color:#4a6ea4;font-weight:700;font-family:'Liberation Sans',sans-serif;">Инструменты</div>
<div class="a t" style="left:754px;top:129.97px;font-size:14.33px;line-height:14.33px;color:#4a6ea4;font-weight:700;font-family:'Liberation Sans',sans-serif;">Подписание</div>
<div class="a t" style="left:870.7px;top:129.49px;font-size:14.9px;line-height:14.9px;color:#4a6ea4;font-weight:700;font-family:'Liberation Sans',sans-serif;">Комментарии</div>
<div class="a" style="left:738px;top:123px;width:1px;height:27px;background:repeating-linear-gradient(#6a6a6a 0 1px,transparent 1px 3px)"></div>
<div class="a" style="left:855px;top:123px;width:1px;height:27px;background:repeating-linear-gradient(#6a6a6a 0 1px,transparent 1px 3px)"></div>
<div class="a" style="left:38px;top:155px;width:40px;height:535px;background:#6b6b6b;border-left:1px solid #3c3c3c;border-bottom:1px solid #3c3c3c"></div>
<div class="a" style="left:78px;top:155px;width:1px;height:535px;background:#bdbdbd"></div>
<div class="a" style="left:79px;top:155px;width:10px;height:535px;background:#585858"></div>
<div class="a" style="left:89px;top:155px;width:175px;height:535px;background:#000"></div>
<div class="a" style="left:264px;top:155px;width:695px;height:535px;background:#fff"></div>
<div class="a" style="left:959px;top:155px;width:10px;height:535px;background:#565656"></div>
<div class="a" style="left:969px;top:155px;width:17px;height:535px;background:#f0f0f0"></div>
<div class="a" style="left:969px;top:155px;width:17px;height:9px;background:#dcdcdc;border-bottom:1px solid #bbb"></div>
<svg class="a" style="left:974px;top:170px;" width="8" height="6" viewBox="0 0 8 6"><path d="M0.8 5.2 L4 1.5 L7.2 5.2" fill="none" stroke="#555" stroke-width="1.7"/></svg>
<div class="a" style="left:970px;top:228px;width:15px;height:17px;background:#cdcdcd"></div>
<svg class="a" style="left:974px;top:680px;" width="8" height="6" viewBox="0 0 8 6"><path d="M0.8 0.8 L4 4.5 L7.2 0.8" fill="none" stroke="#555" stroke-width="1.7"/></svg>
<svg class="a" style="left:46px;top:164px;" width="24" height="25" viewBox="0 0 24 25"><path d="M1.5 5.5 H14.5 V23.5 H1.5 Z" fill="#b4b4b4" stroke="#3a3a3a" stroke-width="1"/>
<path d="M6.5 1.5 H18 L21.5 5 V19.5 H6.5 Z" fill="#bdbdbd" stroke="#3a3a3a" stroke-width="1"/><path d="M17.5 1.8 V5.5 H21" fill="#ddd" stroke="#555" stroke-width="0.7"/></svg>
<svg class="a" style="left:47px;top:208px;" width="19" height="23" viewBox="0 0 19 23"><path d="M1.5 1 H12 V22 L6.8 17.8 L1.5 22 Z" fill="#a4b8c8" stroke="#444" stroke-width="0.9"/>
<path d="M12 1 H17.5 Q18.3 1 18.3 2 V11 H12 Z" fill="#7f9bb2" stroke="#444" stroke-width="0.9"/></svg>
<svg class="a" style="left:45px;top:250px;" width="23" height="24" viewBox="0 0 23 24"><path d="M4.5 20.5 Q1.5 18 4 15 L14.5 4 Q17.5 1 20 3.5 Q22.5 6 19.5 9 L10 19 Q8 21 6.5 19.5 Q5 18 7 16 L15 7.5" fill="none" stroke="#3c3c3c" stroke-width="3.6" stroke-linecap="round"/>
<path d="M4.5 20.5 Q1.5 18 4 15 L14.5 4 Q17.5 1 20 3.5 Q22.5 6 19.5 9 L10 19 Q8 21 6.5 19.5 Q5 18 7 16 L15 7.5" fill="none" stroke="#b4b4b4" stroke-width="1.8" stroke-linecap="round"/></svg>
<svg class="a" style="left:45px;top:293px;" width="24" height="24" viewBox="0 0 24 24"><path d="M12 8 L23 15.5 L12 23 L1 15.5 Z" fill="#9fb4c8" stroke="#3a3a3a" stroke-width="0.9"/>
<path d="M12 1.5 L23 9.2 L12 16.8 L1 9.2 Z" fill="#c6c6c6" stroke="#3a3a3a" stroke-width="0.9" opacity="0.9"/></svg>
<svg class="a" style="left:45px;top:340px;" width="24" height="20" viewBox="0 0 24 20"><rect x="0.8" y="1" width="19.6" height="12.5" fill="#c8c8c8" stroke="#3a3a3a" stroke-width="0.9"/>
<path d="M3 11 Q5 6 7 3.5 Q8 6 6.5 9 Q8.5 7 9.5 9.5 Q10.5 8 11.5 9.5" fill="none" stroke="#111" stroke-width="1.2"/>
<path d="M7 18 L19.5 4.5 Q21 3 22.5 4.5 Q23.5 6 22 7.5 L9.5 20.5 L6.5 20.5 Z" fill="#a3c4de" stroke="#3a3a3a" stroke-width="0.9"/></svg>
<div class="a" style="left:334.7px;top:155px;width:568px;height:6px;overflow:hidden"><div class="a t" style="left:0px;top:-14.65px;transform:scaleX(1.165);transform-origin:0 0;font-family:'Liberation Serif',serif;font-size:16.3px;line-height:16.3px;color:#444;word-spacing:4px">құралдар: түрлі түсті қағаз, қайшы, желім, сызғыш, циркуль және қарындаштар</div></div>
<div class="a t" style="left:358.6px;top:161.95px;width:467.04px;transform:scaleX(1.1650);transform-origin:0 0;display:flex;justify-content:space-between;font-family:'Liberation Serif',serif;font-size:16.3px;line-height:16.3px;color:#222;-webkit-text-stroke:0.15px #222"><span>2.&#8201;Түрлі</span><span>түсті</span><span>қағаздан</span><span>диаметрі</span><span>1</span><span>см</span><span>шеңберлер</span><span>жасаңдар.</span><span>Көк</span></div>
<div class="a t" style="left:334.7px;top:180.95px;width:487.55px;transform:scaleX(1.1650);transform-origin:0 0;display:flex;justify-content:space-between;font-family:'Liberation Serif',serif;font-size:16.3px;line-height:16.3px;color:#222;-webkit-text-stroke:0.15px #222"><span>түсті</span><span>қағаздан</span><span>(протондар)</span><span>10</span><span>шеңбер;</span><span>қызылдан</span><span>(нейтрондар)</span><span>10—15</span></div>
<div class="a t" style="left:334.7px;top:199.85px;transform:scaleX(1.1763);transform-origin:0 0;font-family:'Liberation Serif',serif;font-size:16.3px;line-height:16.3px;color:#222;-webkit-text-stroke:0.15px #222">шеңбер; жасыл қағаздан (электрондар) 10 шеңбер жасаңдар.</div>
<div class="a t" style="left:358.6px;top:218.85px;width:467.04px;transform:scaleX(1.1650);transform-origin:0 0;display:flex;justify-content:space-between;font-family:'Liberation Serif',serif;font-size:16.3px;line-height:16.3px;color:#222;-webkit-text-stroke:0.15px #222"><span>3.&#8201;Әрі</span><span>қарай</span><span>оқушылардың</span><span>бір</span><span>тобына</span><span>көміртектің,</span><span>екінші</span><span>тобына</span></div>
<div class="a t" style="left:334.7px;top:237.85px;transform:scaleX(1.1738);transform-origin:0 0;font-family:'Liberation Serif',serif;font-size:16.3px;line-height:16.3px;color:#222;-webkit-text-stroke:0.15px #222">оттектің Бор диаграммасын жасау ұсынылады.</div>
<div class="a t" style="left:358.6px;top:256.75px;width:474.91px;transform:scaleX(1.1457);transform-origin:0 0;display:flex;justify-content:space-between;font-family:'Liberation Serif',serif;font-size:16.3px;line-height:16.3px;color:#222;-webkit-text-stroke:0.15px #222"><span>4.&#8201;Атомдағы</span><span>бөлшектер</span><span>санын</span><span>анықтап,</span><span>қағаздағы</span><span>бірінші</span><span>шеңберге</span></div>
<div class="a t" style="left:334.5px;top:275.75px;width:504.98px;transform:scaleX(1.1252);transform-origin:0 0;display:flex;justify-content:space-between;font-family:'Liberation Serif',serif;font-size:16.3px;line-height:16.3px;color:#222;-webkit-text-stroke:0.15px #222"><span>(ядро)</span><span>протондар</span><span>мен</span><span>нейтрондарды</span><span>жапсырыңдар.</span><span>Содан</span><span>соң</span><span>электрон-</span></div>
<div class="a t" style="left:334.7px;top:294.85px;width:487.55px;transform:scaleX(1.1650);transform-origin:0 0;display:flex;justify-content:space-between;font-family:'Liberation Serif',serif;font-size:16.3px;line-height:16.3px;color:#222;-webkit-text-stroke:0.15px #222"><span>дық</span><span>деңгейлер</span><span>санын</span><span>анықтап,</span><span>сәйкес</span><span>деңгейлерге</span><span>электрондарды</span></div>
<div class="a t" style="left:334.7px;top:313.75px;width:496.47px;transform:scaleX(1.1441);transform-origin:0 0;display:flex;justify-content:space-between;font-family:'Liberation Serif',serif;font-size:16.3px;line-height:16.3px;color:#222;-webkit-text-stroke:0.15px #222"><span>жапсырыңдар.</span><span>Алынған</span><span>көміртек</span><span>және</span><span>оттек</span><span>атомдарының</span><span>құрылысын</span></div>
<div class="a t" style="left:334.7px;top:332.55px;transform:scaleX(1.1399);transform-origin:0 0;font-family:'Liberation Serif',serif;font-size:16.3px;line-height:16.3px;color:#222;-webkit-text-stroke:0.15px #222">салыстырыңдар.</div>
<svg class="a" style="left:0px;top:0px;" width="1024" height="768" viewBox="0 0 1024 768"><defs>
<radialGradient id="gp" cx="45%" cy="40%" r="60%"><stop offset="0" stop-color="#e6f4fd"/><stop offset="0.45" stop-color="#8fcdf3"/><stop offset="1" stop-color="#3a9de0"/></radialGradient>
<radialGradient id="gn" cx="45%" cy="40%" r="60%"><stop offset="0" stop-color="#fdf0e8"/><stop offset="0.45" stop-color="#f0b08e"/><stop offset="1" stop-color="#d8764c"/></radialGradient>
<radialGradient id="ge" cx="50%" cy="50%" r="55%"><stop offset="0" stop-color="#c9ebdd"/><stop offset="0.5" stop-color="#8fd0b6"/><stop offset="1" stop-color="#4aa585"/></radialGradient>
<radialGradient id="gP" cx="40%" cy="35%" r="65%"><stop offset="0" stop-color="#9ad8f5"/><stop offset="0.5" stop-color="#2aa0dc"/><stop offset="1" stop-color="#1677b4"/></radialGradient>
<radialGradient id="gN" cx="40%" cy="35%" r="65%"><stop offset="0" stop-color="#f07a86"/><stop offset="0.5" stop-color="#d42738"/><stop offset="1" stop-color="#a3121f"/></radialGradient>
<radialGradient id="gE" cx="45%" cy="40%" r="60%"><stop offset="0" stop-color="#8ee08e"/><stop offset="0.6" stop-color="#3cb048"/><stop offset="1" stop-color="#208a30"/></radialGradient>
</defs><circle cx="423" cy="492.5" r="70" fill="none" stroke="#151515" stroke-width="2"/><circle cx="423" cy="492.5" r="46.5" fill="none" stroke="#151515" stroke-width="2"/><circle cx="424.25" cy="513.8" r="9.5" fill="url(#gn)"/><circle cx="449.7" cy="497.2" r="8.5" fill="url(#gn)"/><circle cx="399.5" cy="488.8" r="8.5" fill="url(#gp)"/><path d="M394.7 488.8 H404.3 M399.5 484.0 V493.6" stroke="#111" stroke-width="1.3"/><circle cx="426.75" cy="470.5" r="8.5" fill="url(#gp)"/><path d="M421.95 470.5 H431.55 M426.75 465.7 V475.3" stroke="#111" stroke-width="1.3"/><circle cx="452.2" cy="482.2" r="8.5" fill="url(#gp)"/><path d="M447.4 482.2 H457.0 M452.2 477.4 V487.0" stroke="#111" stroke-width="1.3"/><circle cx="408.5" cy="483" r="10" fill="url(#gn)"/><circle cx="420.5" cy="480.5" r="10.5" fill="url(#gn)"/><circle cx="442.6" cy="484.5" r="9.5" fill="url(#gn)"/><circle cx="420" cy="494" r="9" fill="url(#gn)"/><circle cx="431.3" cy="491.3" r="9" fill="url(#gp)"/><path d="M426.5 491.3 H436.1 M431.3 486.5 V496.1" stroke="#111" stroke-width="1.3"/><circle cx="411.3" cy="500.9" r="9.5" fill="url(#gp)"/><path d="M406.5 500.9 H416.1 M411.3 496.09999999999997 V505.7" stroke="#111" stroke-width="1.3"/><circle cx="437.2" cy="503.4" r="9" fill="url(#gp)"/><path d="M432.4 503.4 H442.0 M437.2 498.59999999999997 V508.2" stroke="#111" stroke-width="1.3"/><path d="M445 473 L507.5 440" fill="none" stroke="#333" stroke-width="0.8"/><ellipse cx="421" cy="421" rx="8" ry="7" fill="url(#ge)"/><rect x="417.4" y="420.1" width="7.2" height="1.9" fill="#111"/><ellipse cx="351.5" cy="492" rx="8" ry="7" fill="url(#ge)"/><rect x="347.9" y="491.1" width="7.2" height="1.9" fill="#111"/><ellipse cx="492.7" cy="492" rx="8" ry="7" fill="url(#ge)"/><rect x="489.09999999999997" y="491.1" width="7.2" height="1.9" fill="#111"/><ellipse cx="422" cy="563.3" rx="8" ry="7" fill="url(#ge)"/><rect x="418.4" y="562.4" width="7.2" height="1.9" fill="#111"/><ellipse cx="393.6" cy="457" rx="8" ry="7" fill="url(#ge)"/><rect x="390.0" y="456.1" width="7.2" height="1.9" fill="#111"/><ellipse cx="458.4" cy="522.3" rx="8" ry="7" fill="url(#ge)"/><rect x="454.79999999999995" y="521.4" width="7.2" height="1.9" fill="#111"/><ellipse cx="531" cy="511" rx="8" ry="7.3" fill="url(#ge)"/><rect x="527.4" y="510.1" width="7.2" height="1.9" fill="#111"/><circle cx="531.4" cy="537" r="9" fill="url(#gp)"/><path d="M526.6 537 H536.1999999999999 M531.4 532.2 V541.8" stroke="#111" stroke-width="1.3"/><circle cx="531.9" cy="564.7" r="9.5" fill="url(#gn)"/><circle cx="774.8" cy="463.5" r="102.5" fill="none" stroke="#8f8f8f" stroke-width="1.3"/><circle cx="774.8" cy="463" r="77" fill="none" stroke="#8f8f8f" stroke-width="1.3"/><circle cx="759.5" cy="447.2" r="10.8" fill="url(#gN)"/><text x="755.2" y="451.7" font-family="Liberation Sans" font-size="12" fill="#fff">N</text><circle cx="790.8" cy="447.2" r="10.8" fill="url(#gN)"/><text x="786.5" y="451.7" font-family="Liberation Sans" font-size="12" fill="#fff">N</text><circle cx="758.2" cy="480.4" r="10.8" fill="url(#gN)"/><text x="753.9000000000001" y="484.9" font-family="Liberation Sans" font-size="12" fill="#fff">N</text><circle cx="790.8" cy="480.4" r="10.8" fill="url(#gN)"/><text x="786.5" y="484.9" font-family="Liberation Sans" font-size="12" fill="#fff">N</text><circle cx="749.7" cy="435.4" r="10.8" fill="url(#gP)"/><text x="744.2" y="439.9" font-family="Liberation Sans" font-size="12" fill="#fff">P</text><text x="751.9000000000001" y="434.9" font-family="Liberation Sans" font-size="7" fill="#fff">+</text><circle cx="799.9" cy="435.4" r="10.8" fill="url(#gP)"/><text x="794.4" y="439.9" font-family="Liberation Sans" font-size="12" fill="#fff">P</text><text x="802.1" y="434.9" font-family="Liberation Sans" font-size="7" fill="#fff">+</text><circle cx="749" cy="490.1" r="10.8" fill="url(#gP)"/><text x="743.5" y="494.6" font-family="Liberation Sans" font-size="12" fill="#fff">P</text><text x="751.2" y="489.6" font-family="Liberation Sans" font-size="7" fill="#fff">+</text><circle cx="799.2" cy="490.1" r="10.8" fill="url(#gP)"/><text x="793.7" y="494.6" font-family="Liberation Sans" font-size="12" fill="#fff">P</text><text x="801.4000000000001" y="489.6" font-family="Liberation Sans" font-size="7" fill="#fff">+</text><circle cx="774.5" cy="429.6" r="10.8" fill="url(#gN)"/><text x="770.2" y="434.1" font-family="Liberation Sans" font-size="12" fill="#fff">N</text><circle cx="738" cy="462.8" r="10.8" fill="url(#gN)"/><text x="733.7" y="467.3" font-family="Liberation Sans" font-size="12" fill="#fff">N</text><circle cx="810.9" cy="462.8" r="10.8" fill="url(#gN)"/><text x="806.6" y="467.3" font-family="Liberation Sans" font-size="12" fill="#fff">N</text><circle cx="774.5" cy="497.9" r="10.8" fill="url(#gN)"/><text x="770.2" y="502.4" font-family="Liberation Sans" font-size="12" fill="#fff">N</text><circle cx="775.1" cy="449.8" r="10.8" fill="url(#gP)"/><text x="769.6" y="454.3" font-family="Liberation Sans" font-size="12" fill="#fff">P</text><text x="777.3000000000001" y="449.3" font-family="Liberation Sans" font-size="7" fill="#fff">+</text><circle cx="758.9" cy="464" r="10.8" fill="url(#gP)"/><text x="753.4" y="468.5" font-family="Liberation Sans" font-size="12" fill="#fff">P</text><text x="761.1" y="463.5" font-family="Liberation Sans" font-size="7" fill="#fff">+</text><circle cx="790.1" cy="464" r="10.8" fill="url(#gP)"/><text x="784.6" y="468.5" font-family="Liberation Sans" font-size="12" fill="#fff">P</text><text x="792.3000000000001" y="463.5" font-family="Liberation Sans" font-size="7" fill="#fff">+</text><circle cx="774.5" cy="478.4" r="10.8" fill="url(#gP)"/><text x="769.0" y="482.9" font-family="Liberation Sans" font-size="12" fill="#fff">P</text><text x="776.7" y="477.9" font-family="Liberation Sans" font-size="7" fill="#fff">+</text><circle cx="739.1" cy="369.1" r="5.4" fill="url(#gE)"/><text x="736.5" y="372.3" font-family="Liberation Sans" font-size="8" fill="#c8f5c0">E</text><circle cx="678.2" cy="429" r="5.4" fill="url(#gE)"/><text x="675.6" y="432.2" font-family="Liberation Sans" font-size="8" fill="#c8f5c0">E</text><circle cx="679" cy="504.3" r="5.4" fill="url(#gE)"/><text x="676.4" y="507.5" font-family="Liberation Sans" font-size="8" fill="#c8f5c0">E</text><circle cx="720.6" cy="516" r="5.4" fill="url(#gE)"/><text x="718.0" y="519.2" font-family="Liberation Sans" font-size="8" fill="#c8f5c0">E</text><circle cx="828" cy="409.2" r="5.4" fill="url(#gE)"/><text x="825.4" y="412.4" font-family="Liberation Sans" font-size="8" fill="#c8f5c0">E</text><circle cx="869" cy="424.5" r="5.4" fill="url(#gE)"/><text x="866.4" y="427.7" font-family="Liberation Sans" font-size="8" fill="#c8f5c0">E</text><circle cx="870" cy="497" r="5.4" fill="url(#gE)"/><text x="867.4" y="500.2" font-family="Liberation Sans" font-size="8" fill="#c8f5c0">E</text><circle cx="774.8" cy="565.5" r="5.4" fill="url(#gE)"/><text x="772.1999999999999" y="568.7" font-family="Liberation Sans" font-size="8" fill="#c8f5c0">E</text></svg>
<div class="a t" style="left:514px;top:425.49px;font-size:13.5px;line-height:13.5px;color:#222;font-weight:400;font-family:'Liberation Serif',sans-serif;">6 протон</div>
<div class="a t" style="left:514px;top:439.69px;font-size:13.5px;line-height:13.5px;color:#222;font-weight:400;font-family:'Liberation Serif',sans-serif;">6 нейтрон</div>
<div class="a t" style="left:546.6px;top:501.48px;font-size:13.4px;line-height:13.4px;color:#222;font-weight:400;font-family:'Liberation Serif',sans-serif;">электрон</div>
<div class="a t" style="left:546.6px;top:528.73px;font-size:13.7px;line-height:13.7px;color:#222;font-weight:400;font-family:'Liberation Serif',sans-serif;">протон</div>
<div class="a t" style="left:546.6px;top:555.36px;font-size:13.9px;line-height:13.9px;color:#222;font-weight:400;font-family:'Liberation Serif',sans-serif;">нейтрон</div>
<div class="a t" style="left:388px;top:581.59px;font-size:14.1px;line-height:14.1px;color:#222;font-weight:400;font-family:'Liberation Serif',sans-serif;">Көміртек атомы</div>
<div class="a t" style="left:738px;top:581.04px;font-size:13.8px;line-height:13.8px;color:#222;font-weight:400;font-family:'Liberation Serif',sans-serif;">Оттек атомы</div>
</body></html>
